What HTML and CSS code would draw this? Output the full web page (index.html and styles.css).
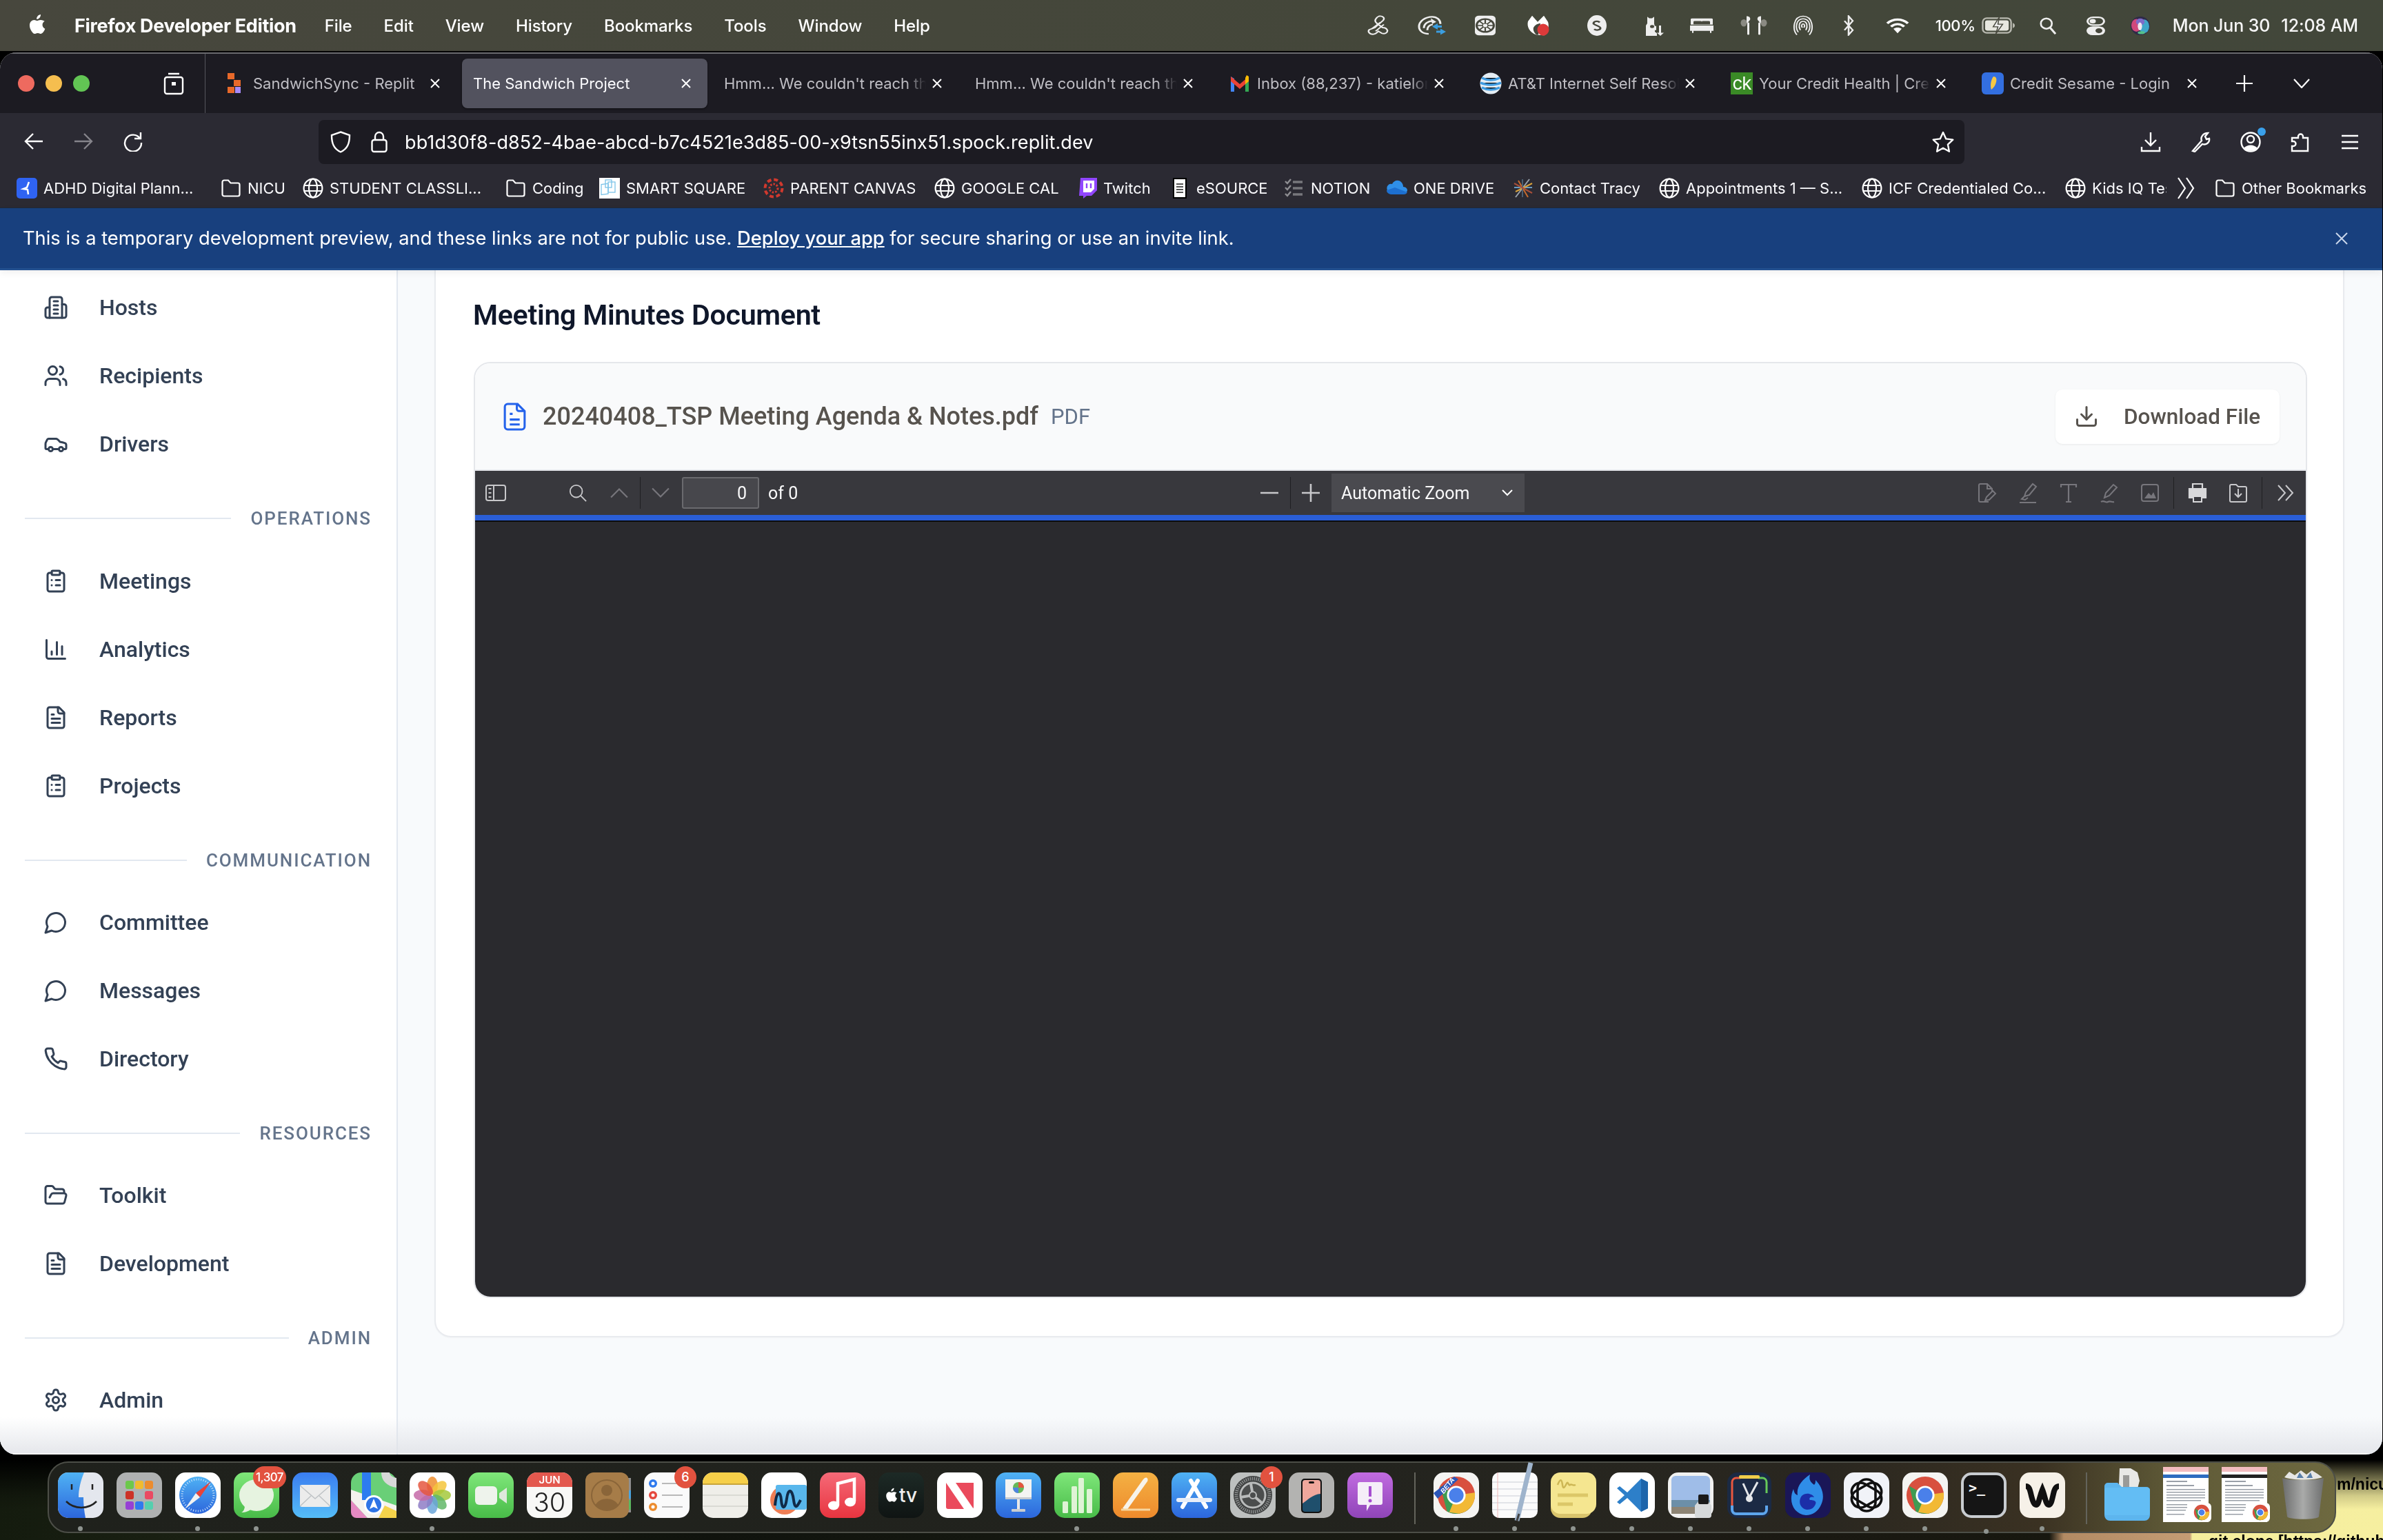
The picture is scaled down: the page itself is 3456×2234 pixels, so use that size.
FILE: index.html
```html
<!DOCTYPE html>
<html lang="en">
<head>
<meta charset="utf-8">
<title>The Sandwich Project</title>
<link rel="stylesheet" href="styles.css">
</head>
<body>
<svg class="defs" width="0" height="0" aria-hidden="true">
  <defs>
    <linearGradient id="gBlue" x1="0" y1="0" x2="0" y2="1"><stop offset="0" stop-color="#4fb2f4"/><stop offset="1" stop-color="#2c66dc"/></linearGradient>
    <linearGradient id="gMail" x1="0" y1="0" x2="0" y2="1"><stop offset="0" stop-color="#3a7df0"/><stop offset="1" stop-color="#55bdf8"/></linearGradient>
    <linearGradient id="gGreen" x1="0" y1="0" x2="0" y2="1"><stop offset="0" stop-color="#7fe77a"/><stop offset="1" stop-color="#48bb48"/></linearGradient>
    <linearGradient id="gRed" x1="0" y1="0" x2="0" y2="1"><stop offset="0" stop-color="#f56a78"/><stop offset="1" stop-color="#e8343f"/></linearGradient>
    <linearGradient id="gOrange" x1="0" y1="0" x2="0" y2="1"><stop offset="0" stop-color="#f4b143"/><stop offset="1" stop-color="#ee8a2c"/></linearGradient>
    <linearGradient id="gPurple" x1="0" y1="0" x2="0" y2="1"><stop offset="0" stop-color="#c16be0"/><stop offset="1" stop-color="#8f45b8"/></linearGradient>
    <linearGradient id="gTrash" x1="0" y1="0" x2="1" y2="0"><stop offset="0" stop-color="#6b6c6c"/><stop offset=".5" stop-color="#a9aaa9"/><stop offset="1" stop-color="#6e6f6f"/></linearGradient>
    <symbol id="globe" viewBox="0 0 30 30"><g fill="none" stroke="currentColor" stroke-width="2.2"><circle cx="15" cy="15" r="13.4"/><ellipse cx="15" cy="15" rx="6" ry="13.4"/><path d="M2 11h26M2 19h26"/></g></symbol>
    <symbol id="folder" viewBox="0 0 30 30"><path d="M2.5 6a2.5 2.5 0 0 1 2.5-2.500h6l3.500 4h10.500a2.500 2.500 0 0 1 2.500 2.500v14a2.500 2.500 0 0 1-2.500 2.500h-20a2.500 2.500 0 0 1-2.500-2.500z" fill="none" stroke="currentColor" stroke-width="2.200"/></symbol>
    <symbol id="x" viewBox="0 0 16 16"><path d="M2 2l12 12M14 2L2 14" fill="none" stroke="currentColor" stroke-width="2"/></symbol>
    <symbol id="chrome" viewBox="0 0 60 60"><circle cx="30" cy="30" r="28" fill="#d8503f"/><path d="M30 30L54.200 44A28 28 0 0 1 16 54.200L6 16z" fill="#3f9b53"/><path d="M30 30H58A28 28 0 0 1 30 58L16 54z" fill="#f2b935" transform="rotate(-8 30 30)"/><circle cx="30" cy="30" r="14" fill="#fff"/><circle cx="30" cy="30" r="11" fill="#4a80ea"/></symbol>
    <symbol id="doc-thumb" viewBox="0 0 66 80"><rect width="66" height="80" fill="#fff"/><g fill="#9aa0a8"><rect x="5" y="20" width="30" height="2"/><rect x="5" y="26" width="40" height="2"/><rect x="5" y="32" width="56" height="1.500"/><rect x="5" y="36" width="56" height="1.500"/><rect x="5" y="40" width="56" height="1.500"/><rect x="5" y="44" width="56" height="1.500"/><rect x="5" y="48" width="50" height="1.500"/><rect x="5" y="54" width="30" height="1.500"/><rect x="5" y="58" width="30" height="1.500"/><rect x="5" y="62" width="28" height="1.500"/><rect x="5" y="68" width="26" height="1.500"/></g></symbol>
  </defs>
</svg>

<div class="wall">
  <span class="wall-text wall-a">m/nicu</span>
  <span class="wall-text wall-b">git clone [https://github</span>
</div>

<div class="desktop">
  <header class="menubar">
    <nav class="menu-left">
      <svg class="apple" viewBox="0 0 28 34"><path fill="#fff" d="M19.500 1c.2 2-.6 3.900-1.700 5.300-1.200 1.400-3 2.500-4.800 2.300-.2-1.900.7-3.900 1.800-5.100C16 2 18 1 19.500 1zM25.700 11.700c-.3.200-3.400 2-3.400 5.900 0 4.500 3.900 6.100 4.100 6.200-.1.300-.6 2.200-2 4.300-1.300 1.800-2.600 3.700-4.600 3.700s-2.600-1.200-5-1.200c-2.300 0-3.100 1.200-5 1.200s-3.200-1.700-4.700-3.800C3.300 25.500 1.900 21.900 1.900 18.400c0-5.600 3.700-8.600 7.200-8.600 1.900 0 3.500 1.300 4.700 1.300 1.100 0 2.900-1.300 5.100-1.300.8 0 3.900.1 6.800 1.900z"/></svg>
      <b class="app-name">Firefox Developer Edition</b>
      <span>File</span><span>Edit</span><span>View</span><span>History</span><span>Bookmarks</span><span>Tools</span><span>Window</span><span>Help</span>
    </nav>
    <div class="status">
      <svg preserveAspectRatio="none" viewBox="0 0 33 40"><g fill="none" stroke="#eee" stroke-width="2.400"><path d="M18 2c5-1 9 3 6 8L12 24l-8 4c-3 3 0 9 5 9 4 0 6-3 8-6l5 4c4 2 9-1 8-6-1-3-4-5-7-5l-8-8c-3-3-3-7-1-10 1-2 2-3 4-4z"/><path d="M8 26l12-12M13 31l12-13"/></g></svg>
      <svg preserveAspectRatio="none" viewBox="0 0 43 40"><g fill="none" stroke="#eee" stroke-width="3"><path d="M17 36C8 36 3 30 3 22 3 12 12 3 22 3c7 0 12 6 12 14"/><path d="M10 25c0-8 6-14 13-14M15 29c0-6 3-10 8-11"/></g><path fill="#eee" d="M20 6l8 7-6 4z"/><path fill="#3b9ee0" d="M30 16l-8 6 8 6v-4h6v-4h-6zM34 26l8 6-8 6v-4h-6v-4h6z"/></svg>
      <svg preserveAspectRatio="none" viewBox="0 0 32 40"><rect x="1" y="1" width="30" height="38" rx="6" fill="#eee"/><circle cx="16" cy="20" r="12.500" fill="none" stroke="#46473c" stroke-width="3"/><g stroke="#46473c" stroke-width="2.200"><path d="M16 8v24M4 20h24M8 12l16 16M24 12L8 28"/></g><circle cx="16" cy="20" r="4" fill="#eee" stroke="#46473c" stroke-width="1.500"/></svg>
      <svg preserveAspectRatio="none" viewBox="0 0 33 40"><path fill="#fff" d="M2 12L8 1l8 12 9-12 6 12c2 8 0 18-5 26l-12-1C4 33 0 22 2 12z"/><path fill="#46473c" d="M10 24c2-5 6-8 10-8l-3 22h-3c-3-4-5-9-4-14z"/><ellipse cx="24" cy="28" rx="8.500" ry="11.500" fill="#dd3a3a"/></svg>
      <svg preserveAspectRatio="none" viewBox="0 0 28 40"><ellipse cx="14" cy="20" rx="14" ry="20" fill="#eee"/><path d="M18 14c-3-4-9-2-9 2 0 3 10 5 10 9 0 4-6 5-9 2" fill="none" stroke="#46473c" stroke-width="3"/></svg>
      <svg preserveAspectRatio="none" viewBox="0 0 28 40"><path fill="#eee" d="M2 40V20l2-4V3l3 3h4l3-3v14l1 4h2v8h-2v3l3 3v5z"/><circle cx="11" cy="22" r="3" fill="#46473c"/><path fill="#eee" d="M21 20h3v14h4l-5 6-5-6h3z"/></svg>
      <svg preserveAspectRatio="none" viewBox="0 0 34 40"><path fill="#eee" d="M3 3h28a2 2 0 0 1 2 2v13H1V5a2 2 0 0 1 2-2zM0 20h34v13H31v5h-2v-5H5v5H3v-5H0z"/><path fill="#46473c" d="M7 9h8a2 2 0 0 1 2 2v6H5v-6a2 2 0 0 1 2-2zM19 9h8a2 2 0 0 1 2 2v6H17v-6a2 2 0 0 1 2-2z"/></svg>
      <svg preserveAspectRatio="none" viewBox="0 0 39 40"><path d="M9 2c4 0 6 3 5 7l-3 5-2 2v0z" fill="#eee"/><rect x="10" y="14" width="3" height="24" rx="1.500" fill="#eee"/><path d="M30 2c-4 0-6 3-5 7l3 5 2 2z" fill="#eee"/><rect x="26" y="14" width="3" height="24" rx="1.500" fill="#eee"/><ellipse cx="5" cy="15" rx="4.500" ry="7" fill="#8a8a82"/><ellipse cx="34" cy="15" rx="4.500" ry="7" fill="#8a8a82"/></svg>
      <svg preserveAspectRatio="none" viewBox="0 0 30 40"><g fill="none" stroke="#eee" stroke-width="2"><path d="M6 38C-1 27 1 2 15 2s16 25 9 36"/><path d="M8 33C3 24 5 7 15 7s12 17 7 26"/><path d="M11 29C8 22 9 12 15 12s7 10 4 17"/><path d="M14 24c-2-3-1-7 1-7s3 4 1 7"/></g></svg>
      <svg preserveAspectRatio="none" viewBox="0 0 18 40"><path d="M3 11l12 18-6 9V2l6 9L3 29" fill="none" stroke="#eee" stroke-width="2.600"/></svg>
      <svg preserveAspectRatio="none" viewBox="0 0 34 30"><g fill="none" stroke="#fff" stroke-width="4"><path d="M2 11c9-9 21-9 30 0"/><path d="M7.500 17c6-6 13-6 19 0"/></g><path d="M11 21c4-3 8-3 12 0l-6 8z" fill="#fff"/></svg>
      <span class="batt-pct">100%</span>
      <svg preserveAspectRatio="none" viewBox="0 0 50 26"><rect x="1.500" y="1.500" width="42" height="23" rx="6" fill="none" stroke="#b9b9b0" stroke-width="2.500"/><rect x="5" y="5" width="35" height="16" rx="3" fill="#e8e8e0"/><path d="M46 9c2 1 3 2 3 4s-1 3-3 4z" fill="#b9b9b0"/><path d="M26 0l-9 15h7l-3 11 10-15h-7z" fill="#eee" stroke="#46473c" stroke-width="1.500"/></svg>
      <svg preserveAspectRatio="none" viewBox="0 0 27 30"><circle cx="11" cy="11" r="9" fill="none" stroke="#eee" stroke-width="3"/><path d="M17 18l9 11" stroke="#eee" stroke-width="3.500"/></svg>
      <svg preserveAspectRatio="none" viewBox="0 0 27 38"><rect x="1.500" y="1.500" width="24" height="16" rx="8" fill="none" stroke="#eee" stroke-width="3"/><circle cx="9" cy="9.500" r="4.500" fill="#eee"/><rect y="20" width="27" height="18" rx="9" fill="#eee"/><circle cx="18" cy="29" r="5" fill="#46473c"/></svg>
      <svg preserveAspectRatio="none" viewBox="0 0 27 38"><ellipse cx="13.500" cy="19" rx="13.500" ry="19" fill="#2f2a48"/><ellipse cx="8" cy="18" rx="7" ry="13" fill="#d0487c"/><ellipse cx="19" cy="20" rx="7" ry="14" fill="#3fa6c8"/><ellipse cx="13.500" cy="11" rx="6" ry="7" fill="#7d6bc9"/><ellipse cx="13" cy="20" rx="3" ry="8" fill="#f0e8f0"/><ellipse cx="15" cy="33" rx="5" ry="3" fill="#56c08a"/></svg>
      <span class="clock"><span>Mon Jun 30</span><span>12:08 AM</span></span>
    </div>
  </header>

  <main class="window">
    <div class="tabbar">
      <div class="traffic">
        <i class="dot red"></i><i class="dot yellow"></i><i class="dot green"></i>
        <svg class="ffview" viewBox="0 0 30 34"><g fill="none" stroke="#fff" stroke-width="2.400"><rect x="2" y="8" width="26" height="24" rx="3"/><path d="M7 3h16"/></g><rect x="12" y="15" width="6" height="5" fill="#fff"/></svg>
      </div>
      <div class="tabs">
        <div class="tab">
          <svg class="fav" viewBox="0 0 32 32"><rect x="4" y="1" width="10" height="9" fill="#e8692a"/><rect x="13" y="11" width="10" height="9" fill="#e8692a"/><rect x="4" y="21" width="10" height="9" fill="#e8692a"/><rect x="15" y="21" width="8" height="9" fill="#a78bfa"/></svg>
          <span class="tab-title">SandwichSync - Replit</span>
          <svg class="close"><use href="#x"/></svg>
        </div>
        <div class="tab active">
          <span class="tab-title">The Sandwich Project</span>
          <svg class="close"><use href="#x"/></svg>
        </div>
        <div class="tab bare">
          <span class="tab-title fade">Hmm... We couldn't reach this page</span>
          <svg class="close"><use href="#x"/></svg>
        </div>
        <div class="tab bare">
          <span class="tab-title fade">Hmm... We couldn't reach this page</span>
          <svg class="close"><use href="#x"/></svg>
        </div>
        <div class="tab">
          <svg class="fav" viewBox="0 0 32 32"><path d="M3 28V6l5 3v19z" fill="#4285f4"/><path d="M29 28V6l-5 3v19z" fill="#34a853"/><path d="M3 6l13 11L29 6v7L16 24 3 13z" fill="#ea4335"/><path d="M26 4l3 2v7l-5 4V8z" fill="#fbbc04"/></svg>
          <span class="tab-title fade">Inbox (88,237) - katielong2316@gmail</span>
          <svg class="close"><use href="#x"/></svg>
        </div>
        <div class="tab">
          <svg class="fav" viewBox="0 0 32 32"><circle cx="16" cy="16" r="15.500" fill="#e4edf4"/><g stroke="#3f9be0" stroke-width="3.500"><path d="M3 8c8 4 18 4 26 0"/><path d="M1 15c9 4 21 4 30 0"/><path d="M3 22c8 4 18 4 26 0"/></g></svg>
          <span class="tab-title fade">AT&amp;T Internet Self Resolution</span>
          <svg class="close"><use href="#x"/></svg>
        </div>
        <div class="tab">
          <span class="fav ck">ck</span>
          <span class="tab-title fade">Your Credit Health | Credit Karma</span>
          <svg class="close"><use href="#x"/></svg>
        </div>
        <div class="tab">
          <svg class="fav" viewBox="0 0 32 32"><rect width="32" height="32" rx="6" fill="#336fe0"/><path d="M17 6c4 0 5 3 4 8-1 4-3 8-7 11-2-5-1-14 3-19z" fill="#f6c844"/></svg>
          <span class="tab-title">Credit Sesame - Login</span>
          <svg class="close"><use href="#x"/></svg>
        </div>
        <svg class="newtab" viewBox="0 0 24 24"><path d="M12 0v24M0 12h24" stroke="#fff" stroke-width="2.200"/></svg>
        <svg class="tablist" viewBox="0 0 24 14"><path d="M1 1l11 12L23 1" fill="none" stroke="#fff" stroke-width="2.200"/></svg>
      </div>
    </div>

    <div class="navbar">
      <svg class="nb back" viewBox="0 0 30 30"><path d="M28 15H3M14 4L3 15l11 11" fill="none" stroke="#fff" stroke-width="2.400"/></svg>
      <svg class="nb fwd" viewBox="0 0 30 30"><path d="M2 15h25M16 4l11 11-11 11" fill="none" stroke="#85848b" stroke-width="2.400"/></svg>
      <svg class="nb reload" viewBox="0 0 30 30"><path d="M25 11A12 12 0 1 0 27 17M26 2v9h-9" fill="none" stroke="#fff" stroke-width="2.400"/></svg>
      <div class="urlbar">
        <svg class="ub shield" viewBox="0 0 30 32"><path d="M15 1.500l13 4.500c0 12-3 20-13 24.500C5 26 2 18 2 6z" fill="none" stroke="#fff" stroke-width="2.400"/></svg>
        <svg class="ub lock" viewBox="0 0 24 32"><rect x="1.500" y="13" width="21" height="17" rx="3" fill="none" stroke="#fff" stroke-width="2.400"/><path d="M6 13V8a6 6 0 0 1 12 0v5" fill="none" stroke="#fff" stroke-width="2.400"/></svg>
        <span class="url">bb1d30f8-d852-4bae-abcd-b7c4521e3d85-00-x9tsn55inx51.spock.replit.dev</span>
        <svg class="ub star" viewBox="0 0 32 32"><path d="M16 2l4.300 9.400 10 1.200-7.400 7 2 10.100L16 24.700l-8.900 5 2-10.100-7.400-7 10-1.200z" fill="none" stroke="#fff" stroke-width="2.400" stroke-linejoin="round"/></svg>
      </div>
      <div class="nav-right">
        <svg viewBox="0 0 30 30"><path d="M15 1v19M7 12l8 8 8-8M2 22v6h26v-6" fill="none" stroke="#fff" stroke-width="2.400"/></svg>
        <svg viewBox="0 0 30 30"><path d="M4 28L17 13c-2-5 2-11 9-11l-4 5 2 4 4-1c1 6-5 10-10 8L7 29z" fill="none" stroke="#fff" stroke-width="2.400"/></svg>
        <span class="acct"><svg viewBox="0 0 30 30"><circle cx="15" cy="15" r="13.500" fill="none" stroke="#fff" stroke-width="2.400"/><circle cx="15" cy="11" r="5" fill="none" stroke="#fff" stroke-width="2.400"/><path d="M5 24c5-6 15-6 20 0-5 5-15 5-20 0z" fill="#fff"/></svg><i class="acct-dot"></i></span>
        <svg viewBox="0 0 30 30"><path d="M3 9h9V7a3.500 3.500 0 0 1 7 0v2h7v19H3v-7h2a3.500 3.500 0 0 0 0-7H3z" fill="none" stroke="#fff" stroke-width="2.400"/></svg>
        <svg viewBox="0 0 30 30"><path d="M3 6h24M3 15h24M3 24h24" stroke="#fff" stroke-width="2.600"/></svg>
      </div>
    </div>

    <div class="bookmarks">
      <div class="bm"><svg viewBox="0 0 30 30"><rect width="30" height="30" rx="5" fill="#2f63f2"/><path d="M18 6l-3 8-5 2 6 1 1 7" fill="none" stroke="#fff" stroke-width="2.500"/></svg><span>ADHD Digital Plann...</span></div>
      <div class="bm"><svg><use href="#folder"/></svg><span>NICU</span></div>
      <div class="bm"><svg><use href="#globe"/></svg><span>STUDENT CLASSLI...</span></div>
      <div class="bm"><svg><use href="#folder"/></svg><span>Coding</span></div>
      <div class="bm"><svg viewBox="0 0 30 30"><rect width="30" height="30" fill="#fff"/><g fill="none" stroke="#7cc3e8" stroke-width="1.300"><rect x="3" y="10" width="10" height="15" transform="skewY(-8)"/><rect x="13" y="6" width="10" height="15"/><rect x="9" y="3" width="9" height="11"/></g></svg><span>SMART SQUARE</span></div>
      <div class="bm"><svg viewBox="0 0 30 30"><circle cx="15" cy="15" r="12.500" fill="none" stroke="#d1392e" stroke-width="4" stroke-dasharray="6 3.800"/><circle cx="15" cy="15" r="6" fill="none" stroke="#d1392e" stroke-width="3" stroke-dasharray="2.500 2"/></svg><span>PARENT CANVAS</span></div>
      <div class="bm"><svg><use href="#globe"/></svg><span>GOOGLE CAL</span></div>
      <div class="bm"><svg viewBox="0 0 30 30"><path d="M6 0h24v18l-8 8h-7l-5 4v-4H4z" fill="#9146ff"/><path d="M10 4h16v12l-5 5h-11z" fill="#fff"/><path d="M15 8v7M21 8v7" stroke="#9146ff" stroke-width="2.400"/></svg><span>Twitch</span></div>
      <div class="bm"><svg viewBox="0 0 30 30"><rect x="5" y="0" width="20" height="30" fill="#000"/><rect x="7" y="2" width="16" height="26" fill="#fff"/><path d="M10 9h10M10 13h10M10 17h10M10 21h10" stroke="#555" stroke-width="1.800"/></svg><span>eSOURCE</span></div>
      <div class="bm"><svg viewBox="0 0 30 30"><g stroke="#77777c" stroke-width="3.500"><path d="M13 6h14M13 15h14M13 24h14"/></g><path d="M2 5l3 3 5-6M2 14l3 3 5-6M2 23l3 3 5-6" fill="none" stroke="#8e8e92" stroke-width="2.400"/></svg><span>NOTION</span></div>
      <div class="bm"><svg viewBox="0 0 30 30"><path d="M8 22c-6 0-9-5-7-10 2-3 4-4 7-3 2-5 9-7 13-3 2 2 3 4 3 7 4 0 6 3 6 5s-2 4-4 4z" fill="#2f8fe8"/><path d="M8 24c-4 0-8-2-8-6l12-4 18 7c-1 2-3 3-5 3z" fill="#1d6fd0"/></svg><span>ONE DRIVE</span></div>
      <div class="bm"><svg viewBox="0 0 30 30"><g stroke-width="2"><path d="M4 28L24 2" stroke="#9aa3ad"/><path d="M8 4l14 24" stroke="#c86a2d"/><path d="M2 14h26" stroke="#6a9bc2"/><path d="M4 20L28 8" stroke="#d9a13a"/><path d="M14 2v26" stroke="#4a5e70"/><path d="M2 8l26 14" stroke="#a84f3a"/></g></svg><span>Contact Tracy</span></div>
      <div class="bm"><svg><use href="#globe"/></svg><span>Appointments 1 — S...</span></div>
      <div class="bm"><svg><use href="#globe"/></svg><span>ICF Credentialed Co...</span></div>
      <div class="bm clip"><svg><use href="#globe"/></svg><span>Kids IQ Test</span></div>
      <svg class="more" viewBox="0 0 26 34"><path d="M2 2l10 15L2 32M14 2l10 15-10 15" fill="none" stroke="#fff" stroke-width="2.200"/></svg>
      <div class="bm"><svg><use href="#folder"/></svg><span>Other Bookmarks</span></div>
    </div>

    <div class="banner">
      <p>This is a temporary development preview, and these links are not for public use. <a>Deploy your app</a> for secure sharing or use an invite link.</p>
      <svg class="banner-x" viewBox="0 0 18 18"><path d="M1 1l16 16M17 1L1 17" stroke="#c9d6ea" stroke-width="2"/></svg>
    </div>

    <div class="page">
      <aside class="sidebar">
        <a class="row"><svg viewBox="0 0 24 24"><path d="M6 22V4a2 2 0 0 1 2-2h8a2 2 0 0 1 2 2v18Z"/><path d="M6 12H4a2 2 0 0 0-2 2v6a2 2 0 0 0 2 2h2"/><path d="M18 9h2a2 2 0 0 1 2 2v9a2 2 0 0 1-2 2h-2"/><path d="M10 6h4M10 10h4M10 14h4M10 18h4"/></svg>Hosts</a>
        <a class="row"><svg viewBox="0 0 24 24"><path d="M16 21v-2a4 4 0 0 0-4-4H6a4 4 0 0 0-4 4v2"/><circle cx="9" cy="7" r="4"/><path d="M22 21v-2a4 4 0 0 0-3-3.870"/><path d="M16 3.130a4 4 0 0 1 0 7.750"/></svg>Recipients</a>
        <a class="row"><svg viewBox="0 0 24 24"><path d="M19 17h2c.6 0 1-.4 1-1v-3c0-.9-.7-1.700-1.500-1.900C18.700 10.600 16 10 16 10s-1.300-1.400-2.200-2.300c-.5-.4-1.100-.7-1.800-.7H5c-.6 0-1.100.4-1.400.9l-1.400 2.900A3.700 3.700 0 0 0 2 12v4c0 .6.4 1 1 1h2"/><circle cx="7" cy="17" r="2"/><path d="M9 17h6"/><circle cx="17" cy="17" r="2"/></svg>Drivers</a>
        <div class="section first"><i></i><span>OPERATIONS</span></div>
        <a class="row"><svg viewBox="0 0 24 24"><rect x="8" y="2" width="8" height="4" rx="1"/><path d="M16 4h2a2 2 0 0 1 2 2v14a2 2 0 0 1-2 2H6a2 2 0 0 1-2-2V6a2 2 0 0 1 2-2h2"/><path d="M12 11h4M12 16h4M8 11h.01M8 16h.01"/></svg>Meetings</a>
        <a class="row"><svg viewBox="0 0 24 24"><path d="M3 3v16a2 2 0 0 0 2 2h16"/><path d="M18 17V9M13 17V5M8 17v-3"/></svg>Analytics</a>
        <a class="row"><svg viewBox="0 0 24 24"><path d="M15 2H6a2 2 0 0 0-2 2v16a2 2 0 0 0 2 2h12a2 2 0 0 0 2-2V7Z"/><path d="M14 2v4a2 2 0 0 0 2 2h4"/><path d="M10 9H8M16 13H8M16 17H8"/></svg>Reports</a>
        <a class="row"><svg viewBox="0 0 24 24"><rect x="8" y="2" width="8" height="4" rx="1"/><path d="M16 4h2a2 2 0 0 1 2 2v14a2 2 0 0 1-2 2H6a2 2 0 0 1-2-2V6a2 2 0 0 1 2-2h2"/><path d="M12 11h4M12 16h4M8 11h.01M8 16h.01"/></svg>Projects</a>
        <div class="section"><i></i><span>COMMUNICATION</span></div>
        <a class="row"><svg viewBox="0 0 24 24"><path d="M7.900 20A9 9 0 1 0 4 16.100L2 22Z"/></svg>Committee</a>
        <a class="row"><svg viewBox="0 0 24 24"><path d="M7.900 20A9 9 0 1 0 4 16.100L2 22Z"/></svg>Messages</a>
        <a class="row"><svg viewBox="0 0 24 24"><path d="M22 16.920v3a2 2 0 0 1-2.180 2 19.790 19.790 0 0 1-8.630-3.070 19.500 19.500 0 0 1-6-6 19.790 19.790 0 0 1-3.070-8.670A2 2 0 0 1 4.110 2h3a2 2 0 0 1 2 1.720 12.840 12.840 0 0 0 .7 2.810 2 2 0 0 1-.45 2.110L8.090 9.910a16 16 0 0 0 6 6l1.270-1.270a2 2 0 0 1 2.110-.45 12.840 12.840 0 0 0 2.810.7A2 2 0 0 1 22 16.920z"/></svg>Directory</a>
        <div class="section"><i></i><span>RESOURCES</span></div>
        <a class="row"><svg viewBox="0 0 24 24"><path d="m6 14 1.500-2.900A2 2 0 0 1 9.240 10H20a2 2 0 0 1 1.940 2.500l-1.540 6a2 2 0 0 1-1.950 1.500H4a2 2 0 0 1-2-2V5a2 2 0 0 1 2-2h3.900a2 2 0 0 1 1.690.9l.81 1.200a2 2 0 0 0 1.670.9H18a2 2 0 0 1 2 2v2"/></svg>Toolkit</a>
        <a class="row"><svg viewBox="0 0 24 24"><path d="M15 2H6a2 2 0 0 0-2 2v16a2 2 0 0 0 2 2h12a2 2 0 0 0 2-2V7Z"/><path d="M14 2v4a2 2 0 0 0 2 2h4"/><path d="M10 9H8M16 13H8M16 17H8"/></svg>Development</a>
        <div class="section"><i></i><span>ADMIN</span></div>
        <a class="row"><svg viewBox="0 0 24 24"><path d="M12.220 2h-.44a2 2 0 0 0-2 2v.18a2 2 0 0 1-1 1.730l-.43.25a2 2 0 0 1-2 0l-.15-.08a2 2 0 0 0-2.730.73l-.22.38a2 2 0 0 0 .73 2.730l.15.1a2 2 0 0 1 1 1.720v.51a2 2 0 0 1-1 1.740l-.15.09a2 2 0 0 0-.73 2.730l.22.38a2 2 0 0 0 2.730.73l.15-.08a2 2 0 0 1 2 0l.43.25a2 2 0 0 1 1 1.730V20a2 2 0 0 0 2 2h.44a2 2 0 0 0 2-2v-.18a2 2 0 0 1 1-1.730l.43-.25a2 2 0 0 1 2 0l.15.08a2 2 0 0 0 2.730-.73l.22-.39a2 2 0 0 0-.73-2.730l-.15-.08a2 2 0 0 1-1-1.740v-.5a2 2 0 0 1 1-1.740l.15-.09a2 2 0 0 0 .73-2.730l-.22-.38a2 2 0 0 0-2.730-.73l-.15.08a2 2 0 0 1-2 0l-.43-.25a2 2 0 0 1-1-1.730V4a2 2 0 0 0-2-2z"/><circle cx="12" cy="12" r="3"/></svg>Admin</a>
      </aside>

      <section class="content">
        <div class="card">
          <h2 class="card-title">Meeting Minutes Document</h2>
          <div class="doc">
            <div class="doc-head">
              <div class="doc-name">
                <svg class="doc-icon" viewBox="0 0 32 40"><path d="M20 2H6a4 4 0 0 0-4 4v28a4 4 0 0 0 4 4h20a4 4 0 0 0 4-4V12z" fill="none" stroke="#2563eb" stroke-width="3"/><path d="M19 2v7a3 3 0 0 0 3 3h8" fill="none" stroke="#2563eb" stroke-width="3"/><path d="M9 16h4M9 24h14M9 31h14" stroke="#2563eb" stroke-width="3"/></svg>
                <span class="doc-file">20240408_TSP Meeting Agenda &amp; Notes.pdf</span>
                <span class="doc-type">PDF</span>
              </div>
              <button class="dl"><svg viewBox="0 0 24 24"><path d="M21 15v4a2 2 0 0 1-2 2H5a2 2 0 0 1-2-2v-4"/><path d="M7 10l5 5 5-5"/><path d="M12 15V3"/></svg>Download File</button>
            </div>
            <div class="pdfbar">
              <div class="pdf-left">
                <span class="pcell"><svg viewBox="0 0 30 24"><rect x="1" y="1" width="28" height="22" rx="3" fill="none" stroke="#c8c8cb" stroke-width="2"/><path d="M12 1v22" stroke="#c8c8cb" stroke-width="2"/><path d="M4.500 6h4M4.500 12h4M4.500 18h4" stroke="#c8c8cb" stroke-width="2"/></svg></span>
                <span class="pcell spaced"><svg class="p24" viewBox="0 0 28 28"><circle cx="11.500" cy="11.500" r="9.500" fill="none" stroke="#c8c8cb" stroke-width="2"/><path d="M18 18l9 9" stroke="#c8c8cb" stroke-width="2"/></svg></span>
                <span class="pcell"><svg class="p24" viewBox="0 0 24 14"><path d="M1 13L12 2l11 11" fill="none" stroke="#77767c" stroke-width="2"/></svg></span>
                <i class="psep"></i>
                <span class="pcell"><svg class="p24" viewBox="0 0 24 14"><path d="M1 1l11 11L23 1" fill="none" stroke="#77767c" stroke-width="2"/></svg></span>
                <span class="pinput">0</span>
                <span class="pof">of 0</span>
              </div>
              <div class="pdf-mid">
                <span class="pcell"><svg class="p24" viewBox="0 0 24 24"><path d="M0 12h24" stroke="#c8c8cb" stroke-width="2.400"/></svg></span>
                <i class="psep"></i>
                <span class="pcell"><svg class="p24" viewBox="0 0 24 24"><path d="M0 12h24M12 0v24" stroke="#c8c8cb" stroke-width="2.400"/></svg></span>
                <span class="pselect"><span>Automatic Zoom</span><svg viewBox="0 0 16 10"><path d="M1 1l7 7 7-7" fill="none" stroke="#fff" stroke-width="2"/></svg></span>
              </div>
              <div class="pdf-right">
                <span class="pcell"><svg class="p30" viewBox="0 0 30 30"><path d="M17 28H5a2 2 0 0 1-2-2V4a2 2 0 0 1 2-2h10l7 7v5M15 2v7h7" fill="none" stroke="#77767c" stroke-width="2"/><path d="M12 26l2-5 9-9 4 4-9 9z" fill="none" stroke="#77767c" stroke-width="2"/></svg></span>
                <span class="pcell"><svg class="p30" viewBox="0 0 30 30"><path d="M10 20l2-6 10-12 5 4-10 12zM10 20l-4 4 5 1 4-3" fill="none" stroke="#77767c" stroke-width="2"/><path d="M3 29h24" stroke="#77767c" stroke-width="2"/></svg></span>
                <span class="pcell"><svg class="p30" viewBox="0 0 30 30"><path d="M4 7V3h22v4M15 3v25M11 28h8" fill="none" stroke="#77767c" stroke-width="2.200"/></svg></span>
                <span class="pcell"><svg class="p30" viewBox="0 0 30 30"><path d="M8 22l2-7L21 3l5 4-11 12zM3 28c5-3 6 2 10 0s5 1 9 0" fill="none" stroke="#77767c" stroke-width="2"/></svg></span>
                <span class="pcell"><svg class="p30" viewBox="0 0 30 30"><rect x="3" y="3" width="24" height="24" rx="3" fill="none" stroke="#77767c" stroke-width="2"/><path d="M7 23l6-8 4 4 3-5 4 9z" fill="#77767c"/></svg></span>
                <i class="psep"></i>
                <span class="pcell"><svg class="p30" viewBox="0 0 30 30"><path d="M8 9V2h14v7M8 22H3V9h24v13h-5" fill="none" stroke="#d8d8da" stroke-width="2.200"/><rect x="3" y="9" width="24" height="12" fill="#d8d8da"/><rect x="9" y="18" width="12" height="10" fill="none" stroke="#d8d8da" stroke-width="2"/></svg></span>
                <span class="pcell"><svg class="p30" viewBox="0 0 30 30"><path d="M3 5a2 2 0 0 1 2-2h7l3 3h10a2 2 0 0 1 2 2v18a2 2 0 0 1-2 2H5a2 2 0 0 1-2-2z" fill="none" stroke="#c8c8cb" stroke-width="2"/><path d="M15 9v12M10 16l5 5 5-5" fill="none" stroke="#c8c8cb" stroke-width="2"/></svg></span>
                <i class="psep"></i>
                <span class="pcell"><svg class="p24" viewBox="0 0 26 26"><path d="M2 2l10 11L2 24M13 2l10 11-10 11" fill="none" stroke="#c8c8cb" stroke-width="2"/></svg></span>
              </div>
            </div>
            <div class="pbar"></div>
            <div class="viewer"></div>
          </div>
        </div>
      </section>
    </div>
    <div class="fade-bottom"></div>
  </main>

  <footer class="dock">
    <div class="app dot-on"><svg viewBox="0 0 66 66"><rect width="66" height="66" rx="15" fill="#e4e7ee"/><path d="M15 0h23c-5 12-8 24-8 36h7c0 10 1 20 3 30H15A15 15 0 0 1 0 51V15A15 15 0 0 1 15 0z" fill="url(#gBlue)"/><path d="M20 17v8M50 17v8" stroke="#222" stroke-width="2.500"/><path d="M12 42c12 12 32 12 44 0" fill="none" stroke="#222" stroke-width="2.500"/></svg></div>
    <div class="app"><svg viewBox="0 0 66 66"><rect width="66" height="66" rx="15" fill="#afb1b1"/><g><rect x="13" y="12" width="12" height="12" rx="3" fill="#6cc84b"/><rect x="27" y="12" width="12" height="12" rx="3" fill="#f0bb2f"/><rect x="41" y="12" width="12" height="12" rx="3" fill="#ec8c2e"/><rect x="13" y="27" width="12" height="12" rx="3" fill="#cc3227"/><rect x="27" y="27" width="12" height="12" rx="3" fill="#a9b3b8"/><rect x="41" y="27" width="12" height="12" rx="3" fill="#ea4a62"/><rect x="13" y="42" width="12" height="12" rx="3" fill="#9640d4"/><rect x="27" y="42" width="12" height="12" rx="3" fill="#2f7aee"/><rect x="41" y="42" width="12" height="12" rx="3" fill="#55cfae"/></g></svg></div>
    <div class="app dot-on"><svg viewBox="0 0 66 66"><rect width="66" height="66" rx="15" fill="#fff"/><circle cx="33" cy="33" r="27" fill="url(#gBlue)"/><circle cx="33" cy="33" r="23" fill="none" stroke="#cfe6fb" stroke-width="3" stroke-dasharray="1 2.500"/><path d="M52 13L36 36 30 30z" fill="#e8433a"/><path d="M14 53l16-23 6 6z" fill="#f2f2f2"/></svg></div>
    <div class="app dot-on"><svg viewBox="0 0 66 66"><rect width="66" height="66" rx="15" fill="url(#gGreen)"/><ellipse cx="33" cy="33" rx="25" ry="23" fill="#e6f3e0"/><path d="M16 48c0 5-2 9-5 10 6 0 12-2 15-6z" fill="#e6f3e0"/></svg><span class="badge wide">1,307</span></div>
    <div class="app"><svg viewBox="0 0 66 66"><rect width="66" height="66" rx="15" fill="url(#gMail)"/><rect x="11" y="18" width="44" height="32" rx="3" fill="#ececec"/><path d="M11 19l22 19 22-19M11 49l16-15M55 49L39 34" fill="none" stroke="#bfc3c6" stroke-width="1.500"/></svg></div>
    <div class="app"><svg viewBox="0 0 66 66"><rect width="66" height="66" rx="15" fill="#69cf77"/><path d="M0 40l24 26H8A8 8 0 0 1 0 58z" fill="#e58ac2"/><path d="M0 25L66 48V66H24L0 40z" fill="#f4f2ee"/><path d="M40 66l9-18 17 8v10z" fill="#f4d24a"/><path d="M16 0h13v40H16z" fill="#2d7cf0"/><path d="M44 0c0 12 8 20 22 22V8c-6-1-10-4-10-8z" fill="#d8d8d8"/><circle cx="33" cy="47" r="14" fill="#fff"/><circle cx="33" cy="47" r="11" fill="#2e74e6"/><path d="M33 38l6 15-6-3-6 3z" fill="#fff"/></svg></div>
    <div class="app dot-on"><svg viewBox="0 0 66 66"><rect width="66" height="66" rx="15" fill="#fff"/><g style="mix-blend-mode:multiply"><ellipse cx="33" cy="19" rx="8" ry="13" fill="#ef8f2f" opacity=".85"/><ellipse cx="33" cy="19" rx="8" ry="13" fill="#f4c63c" opacity=".85" transform="rotate(45 33 33)"/><ellipse cx="33" cy="19" rx="8" ry="13" fill="#a4c93b" opacity=".85" transform="rotate(90 33 33)"/><ellipse cx="33" cy="19" rx="8" ry="13" fill="#62b768" opacity=".85" transform="rotate(135 33 33)"/><ellipse cx="33" cy="19" rx="8" ry="13" fill="#6ba6d9" opacity=".85" transform="rotate(180 33 33)"/><ellipse cx="33" cy="19" rx="8" ry="13" fill="#8e7dc5" opacity=".85" transform="rotate(225 33 33)"/><ellipse cx="33" cy="19" rx="8" ry="13" fill="#c66aa8" opacity=".85" transform="rotate(270 33 33)"/><ellipse cx="33" cy="19" rx="8" ry="13" fill="#e5573f" opacity=".85" transform="rotate(315 33 33)"/></g></svg></div>
    <div class="app"><svg viewBox="0 0 66 66"><rect width="66" height="66" rx="15" fill="url(#gGreen)"/><rect x="10" y="20" width="32" height="27" rx="6" fill="#eef3ec"/><path d="M45 30l11-8v23l-11-8z" fill="#dfe8dc"/></svg></div>
    <div class="app dot-on cal"><span class="cal-m">JUN</span><span class="cal-d">30</span></div>
    <div class="app"><svg viewBox="0 0 66 66"><rect x="60" y="8" width="6" height="50" fill="#8f8f8f"/><rect x="60" y="26" width="6" height="12" fill="#4aa5e0"/><rect x="60" y="40" width="6" height="14" fill="#5bb85f"/><rect width="63" height="66" rx="12" fill="#a67c48"/><circle cx="31" cy="33" r="22" fill="none" stroke="#8a6539" stroke-width="2"/><circle cx="31" cy="26" r="8" fill="#8a6539"/><path d="M14 48c6-13 28-13 34 0-8 8-26 8-34 0z" fill="#8a6539"/></svg></div>
    <div class="app"><svg viewBox="0 0 66 66"><rect width="66" height="66" rx="15" fill="#fafafa"/><circle cx="13" cy="16" r="6" fill="#2f7aee"/><circle cx="13" cy="33" r="6" fill="#e5483e"/><circle cx="13" cy="50" r="6" fill="#ec8c2e"/><circle cx="13" cy="16" r="2.500" fill="#fff"/><circle cx="13" cy="33" r="2.500" fill="#fff"/><circle cx="13" cy="50" r="2.500" fill="#fff"/><path d="M26 16h30M26 33h30M26 50h30" stroke="#b9b9b9" stroke-width="2"/></svg><span class="badge">6</span></div>
    <div class="app"><svg viewBox="0 0 66 66"><rect width="66" height="66" rx="15" fill="#efeee9"/><path d="M0 15A15 15 0 0 1 15 0h36a15 15 0 0 1 15 15v1H0z" fill="#f6cf49"/><rect y="16" width="66" height="2" fill="#c9a53a"/><path d="M0 33h66M0 49h66" stroke="#d4d3cd" stroke-width="1.500"/></svg></div>
    <div class="app"><svg viewBox="0 0 66 66"><rect width="66" height="66" rx="15" fill="#fff"/><circle cx="34" cy="40" r="21" fill="#ee7e55"/><rect x="21" y="18" width="45" height="36" rx="3" fill="#59b7ec"/><path d="M20 48c2-22 8-22 9-8s6 14 8-2 8-14 10 2 6 8 10 0" fill="none" stroke="#102a48" stroke-width="4"/></svg></div>
    <div class="app"><svg viewBox="0 0 66 66"><rect width="66" height="66" rx="15" fill="url(#gRed)"/><path d="M26 48V16l24-6v32" fill="none" stroke="#fff" stroke-width="4.500"/><ellipse cx="20" cy="48" rx="8" ry="6.500" fill="#fff"/><ellipse cx="44" cy="43" rx="8" ry="6.500" fill="#fff"/></svg></div>
    <div class="app tv"><svg class="tv-apple" viewBox="0 0 28 34"><path fill="#fff" d="M19.500 1c.2 2-.6 3.900-1.700 5.300-1.200 1.400-3 2.500-4.800 2.300-.2-1.900.7-3.900 1.800-5.100C16 2 18 1 19.500 1zM25.700 11.700c-.3.200-3.400 2-3.400 5.900 0 4.500 3.900 6.100 4.100 6.200-.1.300-.6 2.200-2 4.300-1.300 1.800-2.600 3.700-4.600 3.700s-2.600-1.200-5-1.200c-2.300 0-3.100 1.200-5 1.200s-3.200-1.700-4.700-3.800C3.300 25.500 1.900 21.900 1.900 18.400c0-5.600 3.700-8.600 7.200-8.600 1.900 0 3.500 1.300 4.700 1.300 1.100 0 2.900-1.300 5.100-1.300.8 0 3.900.1 6.800 1.900z"/></svg><span>tv</span></div>
    <div class="app"><svg viewBox="0 0 66 66"><rect width="66" height="66" rx="15" fill="#fff"/><path d="M13 15h40v35a3 3 0 0 1-3 3H16a3 3 0 0 1-3-3z" fill="#ea4a5c"/><path d="M13 15h14l26 38H39z" fill="#fff"/></svg></div>
    <div class="app"><svg viewBox="0 0 66 66"><rect width="66" height="66" rx="15" fill="url(#gBlue)"/><rect x="14" y="10" width="38" height="27" fill="#f4f4f2"/><rect x="14" y="36" width="38" height="3" fill="#c7cbd0"/><circle cx="33" cy="22" r="8" fill="#67b85a"/><path d="M33 14a8 8 0 0 1 8 8h-8z" fill="#e5563f"/><path d="M33 22v8a8 8 0 0 1-8-8z" fill="#4f85e0"/><rect x="31" y="39" width="4" height="15" fill="#e8e8e8"/><rect x="23" y="53" width="20" height="4" rx="1" fill="#c9cdd2"/></svg></div>
    <div class="app dot-on"><svg viewBox="0 0 66 66"><rect width="66" height="66" rx="15" fill="url(#gGreen)"/><rect x="12" y="42" width="8" height="17" rx="1.500" fill="#dff3d6"/><rect x="26" y="20" width="8" height="39" rx="1.500" fill="#dff3d6" transform="translate(-1 0)"/><rect x="36" y="8" width="8" height="51" rx="1.500" fill="#dff3d6" transform="translate(-1 0)"/><rect x="47" y="24" width="8" height="35" rx="1.500" fill="#dff3d6"/></svg></div>
    <div class="app"><svg viewBox="0 0 66 66"><rect width="66" height="66" rx="15" fill="url(#gOrange)"/><path d="M14 52L44 10c4-5 8-2 6 3L20 55z" fill="#f7f3ea"/><path d="M12 54h42" stroke="#f7d6a0" stroke-width="3"/></svg></div>
    <div class="app"><svg viewBox="0 0 66 66"><rect width="66" height="66" rx="15" fill="url(#gBlue)"/><path d="M38 12L16 50M28 12l22 38" stroke="#fff" stroke-width="6" stroke-linecap="round"/><path d="M10 40h46" stroke="#e8eef8" stroke-width="6" stroke-linecap="round"/></svg></div>
    <div class="app"><svg viewBox="0 0 66 66"><rect width="66" height="66" rx="15" fill="#bdc0bf"/><circle cx="33" cy="33" r="28" fill="#3f4141"/><circle cx="33" cy="33" r="24" fill="none" stroke="#8b8e8e" stroke-width="5" stroke-dasharray="1.500 1.500"/><circle cx="33" cy="33" r="18" fill="#4b4d4d" stroke="#b9bbbb" stroke-width="3"/><path d="M33 33l-3-17M33 33L15 36M33 33l14 12" stroke="#b9bbbb" stroke-width="4"/><circle cx="33" cy="33" r="5" fill="#4b4d4d" stroke="#b9bbbb" stroke-width="2"/></svg><span class="badge">1</span></div>
    <div class="app"><svg viewBox="0 0 66 66"><rect width="66" height="66" rx="15" fill="#b3b3b1"/><rect x="18" y="9" width="30" height="50" rx="5" fill="#111"/><rect x="20" y="11" width="26" height="46" rx="4" fill="#1f4f6c"/><path d="M20 15a4 4 0 0 1 4-4h18a4 4 0 0 1 4 4v16c-10 0-20 10-26 14z" fill="#f0a79c"/><rect x="29" y="13" width="8" height="3" rx="1.500" fill="#111"/></svg></div>
    <div class="app"><svg viewBox="0 0 66 66"><rect width="66" height="66" rx="15" fill="url(#gPurple)"/><path d="M18 14h30a3 3 0 0 1 3 3v27a3 3 0 0 1-3 3H33l-5 9v-9H18a3 3 0 0 1-3-3V17a3 3 0 0 1 3-3z" fill="#f5eef8"/><path d="M33 20v15" stroke="#a64ed0" stroke-width="4"/><circle cx="33" cy="41" r="2.500" fill="#a64ed0"/></svg></div>
    <i class="dock-sep a"></i>
    <div class="app dot-on"><svg viewBox="0 0 66 66"><rect width="66" height="66" rx="15" fill="#f4f4f2"/><use href="#chrome" x="4" y="4" width="58" height="58"/><path d="M0 30L30 6l6 4L6 38z" fill="#2a55b8"/><text x="10" y="30" class="beta" transform="rotate(-52 14 26)">BETA</text></svg></div>
    <div class="app dot-on"><svg viewBox="0 0 66 66"><rect width="66" height="66" rx="10" fill="#fbfbfb"/><path d="M0 14h66M0 24h66M0 34h66M0 44h66M0 54h66" stroke="#c9ced6" stroke-width="1.200"/><path d="M8 0v66" stroke="#f0b8b8"/><path d="M36 70L56-14" stroke="#9fb4cc" stroke-width="7"/><path d="M36 70l3-10" stroke="#444" stroke-width="3"/></svg></div>
    <div class="app dot-on"><svg viewBox="0 0 66 66"><rect x="0" y="6" width="60" height="60" rx="14" fill="#d9c46c"/><rect x="0" width="66" height="60" rx="14" fill="#f5e690"/><path d="M10 18c4-10 6-8 7 0s4 2 6-2 3 4 5 2 4 2 8 0" fill="none" stroke="#cdb654" stroke-width="2.500"/><path d="M10 33h44M10 46h22" stroke="#dcc768" stroke-width="5"/></svg></div>
    <div class="app dot-on"><svg viewBox="0 0 66 66"><rect width="66" height="66" rx="15" fill="#fff"/><path d="M46 9l10 5v38l-10 5-20-20-11 9-4-3 11-10-11-10 4-3 11 9z" fill="#2d7fc9"/><path d="M46 9v48l10-5V14z" fill="#1d65ab"/></svg></div>
    <div class="app dot-on"><svg viewBox="0 0 66 66"><rect width="66" height="66" rx="15" fill="#f1f1f0"/><rect x="5" y="5" width="56" height="40" rx="6" fill="#9fbde8"/><rect x="5" y="40" width="56" height="20" fill="#6c8fa8"/><rect x="5" y="50" width="34" height="10" fill="#8d8474"/><path d="M44 34h14l1 6v2l4 6v14a4 4 0 0 1-4 4H43a4 4 0 0 1-4-4V48l5-6z" fill="#d6d9da"/><rect x="44" y="32" width="15" height="14" rx="2" fill="#1a1a1a"/></svg></div>
    <div class="app dot-on"><svg viewBox="0 0 66 66"><rect x="1" width="64" height="66" rx="15" fill="#1b2a44"/><path d="M8 54V14a6 6 0 0 1 6-6h6" fill="none" stroke="#e8573f" stroke-width="3"/><path d="M58 30V14a6 6 0 0 0-6-6h-6" fill="none" stroke="#66c95a" stroke-width="3"/><path d="M8 48v6a6 6 0 0 0 6 6h38a6 6 0 0 0 6-6v-6" fill="none" stroke="#5da5ec" stroke-width="4"/><rect x="18" y="4" width="30" height="5" rx="2" fill="#efcc4a"/><path d="M33 36L24 16M33 36l12-22" stroke="#e4e7ea" stroke-width="3"/><circle cx="33" cy="38" r="5" fill="#e4e7ea"/></svg></div>
    <div class="app dot-on"><svg viewBox="0 0 66 66"><rect width="66" height="66" rx="15" fill="#1a1657"/><path d="M30 62C12 60 4 42 12 24c1 6 3 8 6 9-2-12 6-22 18-30-2 8 1 11 6 15 2-2 2-4 2-7 10 10 14 24 8 36-4 9-12 15-22 15z" fill="#2f8de8"/><path d="M32 54c-10-1-14-12-8-20 6-6 16-3 18 2-6-2-8 2-6 4 6 0 10 2 8 6-2 5-6 8-12 8z" fill="#1b2ea8"/></svg></div>
    <div class="app dot-on"><svg viewBox="0 0 66 66"><rect width="66" height="66" rx="15" fill="#f1f3f8"/><g fill="none" stroke="#111" stroke-width="3.600"><rect x="20" y="10" width="26" height="46" rx="13"/><rect x="20" y="10" width="26" height="46" rx="13" transform="rotate(60 33 33)"/><rect x="20" y="10" width="26" height="46" rx="13" transform="rotate(120 33 33)"/></g></svg></div>
    <div class="app dot-on"><svg viewBox="0 0 66 66"><rect width="66" height="66" rx="15" fill="#f4f4f2"/><use href="#chrome" x="4" y="4" width="58" height="58"/></svg></div>
    <div class="app dot-on term"><span>&gt;_</span></div>
    <div class="app dot-on"><svg viewBox="0 0 66 66"><rect width="66" height="66" rx="15" fill="#f6f1e8"/><path d="M9 20c5 0 6 5 8 14 2 8 4 13 7 13 4 0 4-10 9-22 4 10 5 22 9 22s5-8 7-16c1-5 3-11 8-11" fill="none" stroke="#111" stroke-width="8"/></svg></div>
    <i class="dock-sep b"></i>
    <div class="app"><svg class="over" viewBox="0 0 66 76"><path d="M22 0h16l10 6 3 12-8 30H20z" fill="#e8e8e6"/><rect x="27" y="10" width="9" height="38" fill="#9a9a98"/><path d="M0 26a5 5 0 0 1 5-5h14l6 6h36a5 5 0 0 1 5 5v36a8 8 0 0 1-8 8H8a8 8 0 0 1-8-8z" fill="#5db5ee"/><rect y="28" width="66" height="40" rx="4" fill="#63bdf4"/></svg></div>
    <div class="app"><svg class="over" viewBox="0 0 66 80"><use href="#doc-thumb" width="66" height="80"/><rect width="66" height="7" fill="#f3bcc0"/><rect y="11" width="66" height="5" fill="#2d6cc0"/><rect x="42" y="52" width="28" height="28" rx="6" fill="#fff"/><use href="#chrome" x="44" y="54" width="24" height="24"/></svg></div>
    <div class="app"><svg class="over" viewBox="0 0 66 80"><use href="#doc-thumb" width="66" height="80"/><rect width="66" height="7" fill="#f3bcc0"/><rect y="11" width="66" height="5" fill="#222"/><rect x="42" y="52" width="28" height="28" rx="6" fill="#fff"/><use href="#chrome" x="44" y="54" width="24" height="24"/></svg></div>
    <div class="app"><svg class="over trash" viewBox="0 0 66 76"><path d="M3 14c8 4 52 4 60 0l-7 56c-1 5-44 5-46 0z" fill="url(#gTrash)"/><path d="M6 13l7-8 8 5 9-7 8 6 8-6 8 5 7 5c-14 5-40 5-55 0z" fill="#e6e6e4"/><path d="M24 14l4-8 6 8zM38 14l6-8 3 8z" fill="#5a7fa8"/></svg></div>
  </footer>
</div>
</body>
</html>
```

FILE: styles.css
```css
* { box-sizing: border-box; }
html, body { margin: 0; padding: 0; }
body {
  width: 3456px; height: 2234px; overflow: hidden; position: relative;
  background: #000;
  font-family: "Inter", "Noto Sans", sans-serif;
}
.defs { position: absolute; }

/* wallpaper, visible below and beside the window */
.wall {
  position: absolute; left: 0; bottom: 0; width: 100%; height: 124px; overflow: hidden;
  background:
    linear-gradient(to bottom, #000 0, #000 8px, rgba(0,0,0,.62) 30px, rgba(0,0,0,.15) 60px, rgba(0,0,0,0) 80px),
    linear-gradient(to right, #141b0e 0, #1a2013 8%, #10130d 30%, #171a12 50%, #1c1a14 70%, #17170f 86%, #b28a63 86.6%, #c49c74 91.9%, #f5ee9c 92%, #f6efa0 100%);
}
.wall-text { position: absolute; color: #000; font-family: "Liberation Sans", sans-serif; font-weight: 700; font-size: 23px; white-space: nowrap; }
.wall-a { left: 3389px; top: 30px; }
.wall-b { left: 3203px; top: 113px; }

.desktop { position: relative; display: flex; flex-direction: column; height: 100%; }

/* macOS menu bar */
.menubar {
  height: 74px; flex: none; display: flex; align-items: center; justify-content: space-between;
  background: linear-gradient(90deg, #47473d, #44473a 60%, #42473a);
  color: #fff;
}
.menu-left { display: flex; align-items: center; gap: 46px; padding-left: 41px; font-size: 24px; font-weight: 500; letter-spacing: -.1px; }
.apple { width: 26px; height: 31px; margin-top: -4px; margin-right: -5px; }
.app-name { font-weight: 700; font-size: 27px; letter-spacing: -.35px; margin-right: -5px; }

.status {
  display: grid; align-items: center; justify-items: start; height: 100%;
  margin-right: 36px; color: #fff; font-size: 22px; font-weight: 500;
  grid-template-columns: 73px 83px 76px 88px 83px 66px 73px 76px 72px 63px 72px 67px 84px 68px 64px 61px auto;
}
.status svg { display: block; height: 30px; }
.status svg:nth-of-type(1) { width: 33px; }
.status svg:nth-of-type(2) { width: 43px; }
.status svg:nth-of-type(3) { width: 32px; }
.status svg:nth-of-type(4) { width: 33px; }
.status svg:nth-of-type(5) { width: 28px; }
.status svg:nth-of-type(6) { width: 28px; }
.status svg:nth-of-type(7) { width: 34px; height: 24px; }
.status svg:nth-of-type(8) { width: 39px; }
.status svg:nth-of-type(9) { width: 30px; }
.status svg:nth-of-type(10) { width: 18px; }
.status svg:nth-of-type(11) { width: 34px; height: 24px; }
.status svg:nth-of-type(12) { width: 49px; height: 24px; }
.status svg:nth-of-type(13) { width: 24px; height: 25px; }
.status svg:nth-of-type(14) { width: 27px; height: 27px; }
.status svg:nth-of-type(15) { width: 28px; height: 27px; }
.batt-pct { letter-spacing: -.4px; }
.clock { display: flex; gap: 16px; font-size: 25px; font-weight: 500; letter-spacing: -.1px; color: #f6f6f6; white-space: nowrap; }

/* browser window */
.window {
  position: relative; flex: none; display: flex; flex-direction: column;
  width: 3455px; height: 2034px; margin-top: 2px;
  border-radius: 24px; overflow: hidden;
  background: #fff;
  box-shadow: inset 0 -2px 0 #24344a;
}
.tabbar { height: 88px; flex: none; display: flex; background: #1c1b22; border-top: 2px solid #6b6b70; }
.traffic { width: 298px; flex: none; display: flex; align-items: center; border-right: 1px solid #55555c; padding-left: 26px; }
.dot { width: 24px; height: 24px; border-radius: 50%; margin-right: 16px; }
.dot.red { background: #ee6a5f; } .dot.yellow { background: #f5be4f; } .dot.green { background: #62c554; }
.ffview { width: 30px; height: 34px; margin-left: 91px; }
.tabs { display: flex; align-items: center; gap: 8px; padding-left: 8px; color: #bfbec4; font-size: 22px; }
.tab { width: 356px; height: 72px; flex: none; display: flex; align-items: center; padding: 0 23px 0 20px; border-radius: 8px; }
.tab.active { background: #52525e; color: #fbfbfe; padding-left: 16px; box-shadow: 0 1px 3px rgba(0,0,0,.5); }
.tab.bare { padding-left: 16px; }
.fav { width: 32px; height: 32px; flex: none; margin-right: 9px; }
.ck { background: #3a8a26; color: #fff; font-size: 26px; line-height: 32px; text-align: center; letter-spacing: -1px; }
.tab-title { flex: 1; overflow: hidden; white-space: nowrap; }
.tab-title.fade { -webkit-mask-image: linear-gradient(90deg, #000 90%, transparent 100%); mask-image: linear-gradient(90deg, #000 90%, transparent 100%); }
.close { width: 16px; height: 16px; margin-left: 8px; flex: none; color: #fff; }
.newtab { width: 24px; height: 24px; margin-left: 25px; flex: none; }
.tablist { width: 24px; height: 14px; margin-left: 51px; flex: none; }

.navbar { height: 74px; flex: none; display: flex; align-items: flex-end; background: #2b2a33; padding-left: 34px; }
.nb { width: 30px; height: 30px; align-self: center; margin-right: 42px; margin-top: 8px; flex: none; }
.urlbar { width: 2387px; height: 64px; margin-left: 212px; display: flex; align-items: center; background: #1c1b22; border-radius: 8px; padding: 0 15px 0 17px; }
.ub { flex: none; }
.shield { width: 30px; height: 32px; }
.lock { width: 24px; height: 32px; margin-left: 29px; }
.url { margin-left: 25px; flex: 1; color: #fff; font-size: 27px; letter-spacing: .1px; white-space: nowrap; }
.star { width: 32px; height: 32px; }
.nav-right { display: flex; align-items: center; gap: 42.300px; height: 64px; margin-left: 255px; }
.nav-right svg { width: 30px; height: 30px; display: block; }
.acct { position: relative; display: block; }
.acct-dot { position: absolute; right: -7px; top: -6px; width: 12px; height: 12px; border-radius: 50%; background: #3aa0ea; }

.bookmarks {
  height: 64px; flex: none; display: grid; align-items: center; padding: 6px 0 0 24px;
  background: #2b2a33; color: #fbfbfe; font-size: 22px;
  grid-template-columns: 296px 119px 294px 136px 238px 248px 206px 135px 166px 149px 183px 212px 294px 295px 162px 55px 1fr;
  border-bottom: 1px solid #1f2a3a;
}
.bm { display: flex; align-items: center; gap: 9px; white-space: nowrap; overflow: hidden; min-width: 0; }
.bm span { overflow: hidden; }
.bm svg { width: 30px; height: 30px; flex: none; color: #fff; }
.bm.clip { padding-right: 15px; }
.more { width: 26px; height: 34px; }

.banner {
  height: 90px; flex: none; position: relative; z-index: 2; display: flex; align-items: center; justify-content: space-between;
  padding: 0 48px 0 33px; background: #18407e; border-bottom: 3px solid #22508f;
  box-shadow: 0 4px 10px rgba(0,0,0,.06);
  color: #fff; font-size: 27.300px;
}
.banner p { margin: 0; }
.banner a { text-decoration: underline; font-weight: 500; }
.banner-x { width: 18px; height: 18px; margin-right: 2px; }

/* app page */
.page { flex: 1; min-height: 0; display: flex; font-family: "Roboto", sans-serif; background: #f8fafc; }
.sidebar { width: 577px; flex: none; padding: 4px 36px 0 36px; background: #fff; border-right: 2px solid #e2e8f0; }
.row { height: 99px; display: flex; align-items: center; gap: 45px; padding-left: 27px; font-size: 32px; font-weight: 500; color: #334155; }
.row svg { width: 36px; height: 36px; flex: none; fill: none; stroke: #334155; stroke-width: 2; stroke-linecap: round; stroke-linejoin: round; }
.section { height: 99px; padding-top: 18px; display: flex; align-items: center; gap: 28px; font-size: 26px; font-weight: 500; letter-spacing: 1.900px; color: #64748b; }
.section.first { height: 100px; }
.section i { flex: 1; height: 2px; background: #e2e8f0; }

.content { flex: 1; min-width: 0; padding: 0 55px 0 53px; }
.card {
  margin-top: -20px; padding: 55px 52px 55px 55px; background: #fff;
  border: 2px solid #e9ebef; border-top: 0; border-radius: 0 0 24px 24px;
  box-shadow: 0 1px 2px rgba(0,0,0,.03);
}
.card-title { margin: 0 0 38px -1px; height: 60px; line-height: 60px; font-size: 41.200px; font-weight: 600; color: #0f172a; letter-spacing: -.3px; }
.doc { border: 2px solid #e5e7eb; border-radius: 24px; overflow: hidden; display: flex; flex-direction: column; }
.doc-head { height: 156px; flex: none; display: flex; align-items: center; justify-content: space-between; padding: 0 38px 0 41px; background: #f9fafb; border-bottom: 2px solid #e5e7eb; }
.doc-name { display: flex; align-items: center; }
.doc-icon { width: 33px; height: 41px; margin-right: 24px; }
.doc-file { font-size: 36px; font-weight: 500; color: #57534e; }
.doc-type { margin-left: 18px; font-size: 31px; color: #64748b; }
.dl {
  height: 79px; width: 325px; display: flex; align-items: center; gap: 36px; padding: 0 0 0 27px;
  border: 0; border-radius: 10px; background: #fff; box-shadow: 0 1px 3px rgba(0,0,0,.07);
  font: 500 31.500px "Roboto", sans-serif; color: #57534e;
}
.dl svg { width: 36px; height: 36px; flex: none; fill: none; stroke: #57534e; stroke-width: 2; stroke-linecap: round; stroke-linejoin: round; }

.pdfbar { height: 64px; flex: none; display: grid; grid-template-columns: 1122px 401px 1fr; align-items: center; background: #38383d; font-size: 25px; color: #f9f9fa; }
.pdf-left, .pdf-mid, .pdf-right { display: flex; align-items: center; height: 100%; }
.pdf-right { justify-content: flex-end; }
.pdf-right .pcell { width: 59px; }
.pdf-right .psep { margin: 0 4.500px; }
.pcell { width: 60px; height: 100%; display: flex; align-items: center; justify-content: center; flex: none; }
.pcell svg { width: 30px; height: 24px; display: block; }
.pcell .p24 { width: 26px; height: 26px; }
.pcell .p30 { width: 30px; height: 30px; }
.pcell.spaced { margin-left: 59px; }
.psep { width: 1px; height: 46px; background: #1f1f22; flex: none; margin: 0 -1px 0 0; }
.pinput { width: 112px; height: 46px; flex: none; margin-left: 1px; padding: 0 16px 0 0; display: flex; align-items: center; justify-content: flex-end; background: #47474c; border: 2px solid #6a6a6e; border-radius: 3px; }
.pof { margin-left: 13px; }
.pselect { width: 280px; height: 56px; flex: none; display: flex; align-items: center; justify-content: space-between; padding: 0 17px 0 14px; background: #4a4a4f; }
.pselect svg { width: 16px; height: 10px; }
.pbar { height: 10px; flex: none; background: #2a5ed6; border-bottom: 2px solid #0c0c0d; }
.viewer { height: 1124px; background: #2a2a2e; }

.fade-bottom { position: absolute; left: 0; right: 0; bottom: 2px; height: 52px; background: linear-gradient(to bottom, rgba(225,227,232,0), rgba(225,227,232,.85)); pointer-events: none; }

/* dock */
.dock {
  position: relative; flex: none; display: flex; align-items: flex-start; gap: 19px;
  width: 3319px; height: 104px; margin: 10px 0 0 69px; padding: 14px 0 0 13px;
  border: 2px solid #4c4e47; border-radius: 30px;
  background: linear-gradient(90deg, #1f211c 0, #22231e 55%, #2a2720 78%, #3a3122 87%, #5f5a37 93%, #6e6940 100%);
}
.app { position: relative; width: 66px; height: 66px; flex: none; }
.app > svg { display: block; width: 66px; height: 66px; overflow: visible; }
.dot-on::after { content: ""; position: absolute; left: 29px; top: 78px; width: 7px; height: 7px; border-radius: 50%; background: #8e938f; }
.badge { position: absolute; right: -10px; top: -9px; min-width: 32px; height: 32px; border-radius: 16px; background: #e2523f; color: #fff; font-size: 18px; line-height: 32px; text-align: center; font-weight: 500; }
.badge.wide { right: -10px; width: 48px; height: 32px; font-size: 17px; letter-spacing: -.6px; }
.cal { border-radius: 15px; overflow: hidden; background: #f8f8f6; text-align: center; }
.cal-m { display: block; height: 21px; background: #e3584e; color: #fff; font-size: 15px; line-height: 21px; font-weight: 600; }
.cal-d { display: block; color: #222; font-size: 38px; line-height: 44px; font-weight: 300; }
.tv { display: flex; align-items: center; justify-content: center; gap: 2px; border-radius: 15px; background: linear-gradient(#1d2a26, #0f1413); color: #eee; font-size: 28px; font-weight: 500; }
.app > .tv-apple { width: 18px; height: 22px; }
.term { border-radius: 15px; background: #151515; border: 4px solid #c8ccd0; color: #fff; font: 700 20px "DejaVu Sans Mono", monospace; padding: 6px 0 0 7px; }
.term span { display: block; }
.beta { fill: #fff; font: italic 700 10px "Liberation Sans", sans-serif; }
.dock-sep { width: 2px; height: 75px; margin-top: 0; flex: none; background: #63635b; }
.dock-sep.a { margin-left: 12px; margin-right: 7px; }
.dock-sep.b { margin-left: 11px; margin-right: 6px; }
.app > .over { height: 80px; margin-top: -8px; }
.app > .over.trash { height: 76px; margin-top: -6px; }
```
